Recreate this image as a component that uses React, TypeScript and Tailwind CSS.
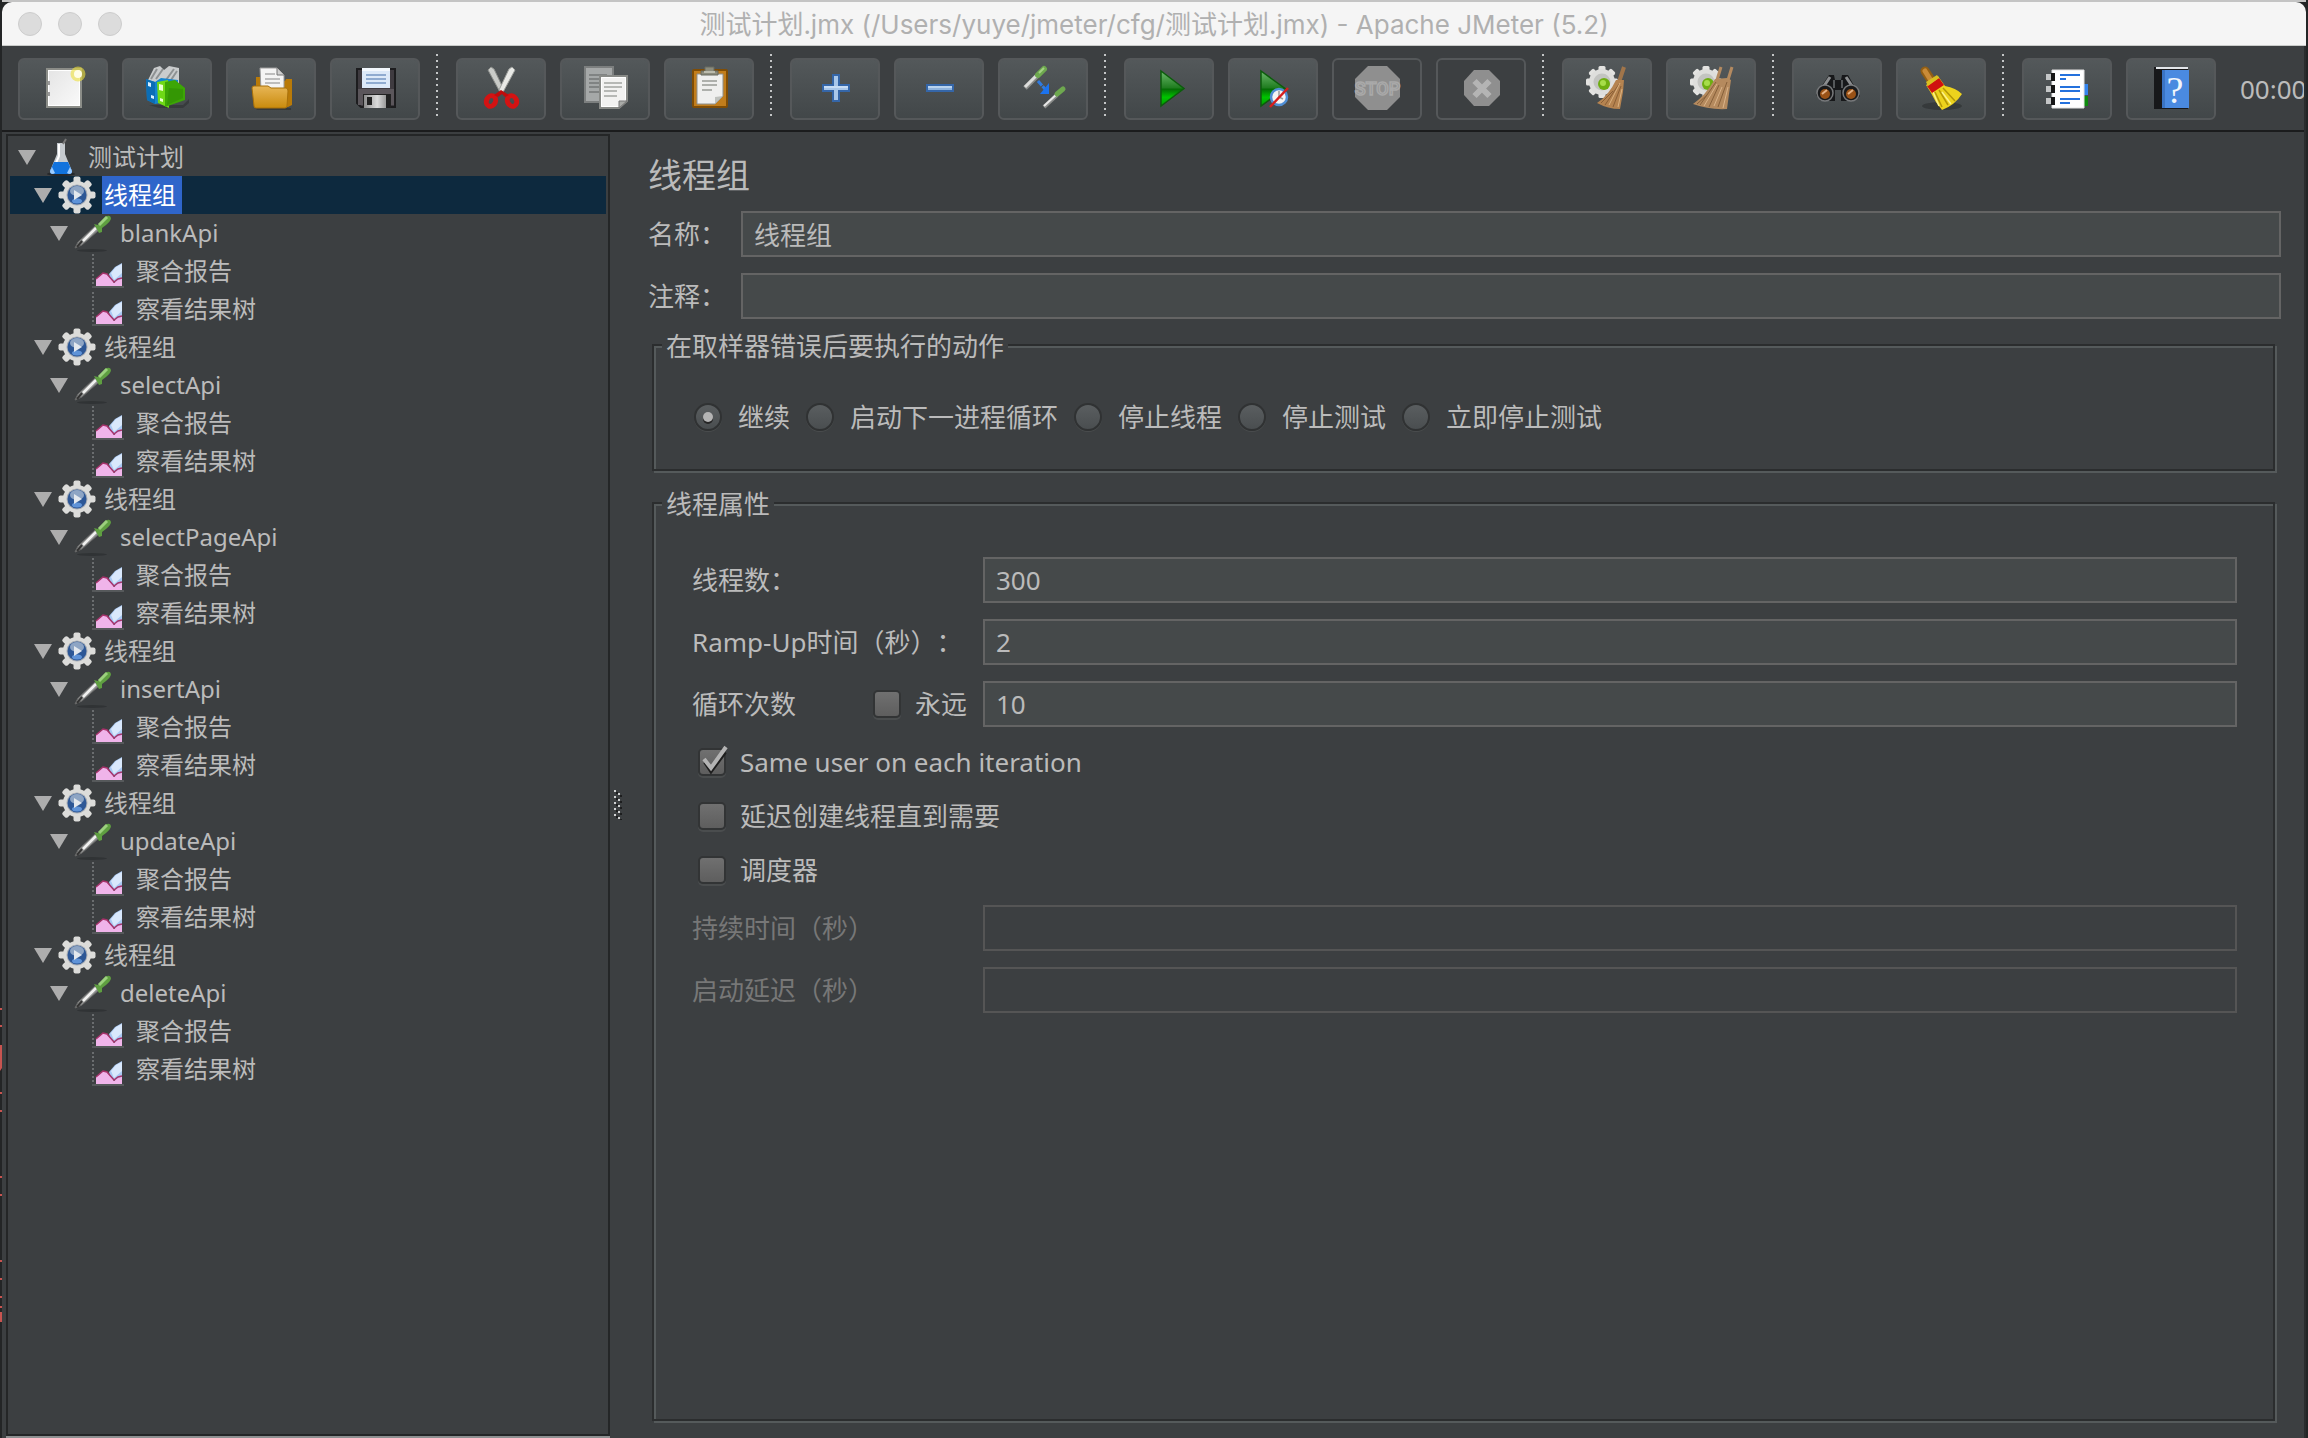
import { useState, type ReactNode } from "react";
import clsx from "clsx";

interface IconProps {
  children: ReactNode;
}

// 工具栏图标统一画布
function ToolIcon({ children }: IconProps) {
  return (
    <svg viewBox="0 0 44 44" className="size-11 overflow-visible" aria-hidden="true">
      {children}
    </svg>
  );
}

const GEAR_TEETH = [0, 45, 90, 135, 180, 225, 270, 315];

function NewIcon() {
  return (
    <ToolIcon>
      <defs>
        <linearGradient id="page" x1="0" y1="0" x2="1" y2="1">
          <stop offset="0" stopColor="#e4e4e4" />
          <stop offset="1" stopColor="#fafafa" />
        </linearGradient>
      </defs>
      <rect x="6" y="2" width="34" height="38" fill="url(#page)" stroke="#8b8d88" strokeWidth="2" />
      <rect x="7.500" y="3.500" width="31" height="35" fill="none" stroke="#fff" />
      <path d="M8 14v4M8 25v4" stroke="#999" strokeWidth="2" />
      <circle cx="37" cy="7" r="7.500" fill="#efe13c" opacity=".6" />
      <circle cx="37" cy="7" r="4" fill="#fffde6" />
    </ToolIcon>
  );
}

function TemplatesIcon() {
  return (
    <ToolIcon>
      <path d="M4 38h34l6-6v4l-6 5H14z" fill="#2d3132" opacity=".6" />
      <path d="M3 13L9 1l6-2 4 4 5-4 10 2v18H4z" fill="#c9cccd" />
      <path d="M6 12L12 2M11 12L18 2M21 13L29 2M26 13l6-9" stroke="#8e9293" strokeWidth="2" />
      <path d="M1 12l9 3 6-4 17 2v8L16 36l-6 1-8-4z" fill="#1485cf" />
      <path d="M1 12l9 3v22l-8-4z" fill="#0b6db5" />
      <path d="M3 15l3 1v4l-3-1zM6 28l3 1v3l-3-1z" fill="#d5efff" />
      <path d="M12 15l11-2 1 28-11-5z" fill="#6fd916" />
      <path d="M20 15l10-2 10 8v12L20 40z" fill="#3da606" />
      <path d="M24 21l14 1v9L22 38z" fill="#2f8e04" opacity=".6" />
      <path d="M14 17l4 1v6l-4-1zM15 31l3 1v3l-3-1z" fill="#e8ffd2" />
    </ToolIcon>
  );
}

function OpenIcon() {
  return (
    <ToolIcon>
      <defs>
        <linearGradient id="folder" x1="0" y1="0" x2="0" y2="1">
          <stop offset="0" stopColor="#e8b656" />
          <stop offset="1" stopColor="#c98b0d" />
        </linearGradient>
      </defs>
      <path d="M6 41h36v2H8z" fill="#2b2e2f" opacity=".6" />
      <path d="M7 10h6v4h23l1-2h6v26l-4 2H7z" fill="#b97a08" />
      <path d="M11 1h17l7 7v16H12z" fill="#f4f4f4" stroke="#9b9b9b" />
      <path d="M28 1v7h7" fill="#cfcfcf" stroke="#777" />
      <path d="M16 7h10M16 12h15M16 16h15" stroke="#bdbdbd" strokeWidth="2" />
      <path d="M3 21q0-2 2-2h14l3 2h15q2 0 2 3l-1 15q0 2-2 2H7q-2 0-2-2z" fill="url(#folder)" stroke="#a8700a" />
    </ToolIcon>
  );
}

function SaveIcon() {
  return (
    <ToolIcon>
      <defs>
        <linearGradient id="metal" x1="0" y1="0" x2="1" y2="0">
          <stop offset="0" stopColor="#8c8c8c" />
          <stop offset=".6" stopColor="#dcdcdc" />
          <stop offset="1" stopColor="#9a9a9a" />
        </linearGradient>
      </defs>
      <path d="M4 2h38v38H8l-4-4z" fill="#3f3b40" stroke="#1d1d1f" strokeWidth="2" />
      <path d="M5 22h36v16H5z" fill="#5b565b" />
      <rect x="9" y="1" width="28" height="20" fill="#dce9f8" />
      <rect x="9" y="1" width="28" height="3" fill="#f3f8fd" />
      <path d="M13 8h20M13 12h20M13 16h20" stroke="#8fabd0" strokeWidth="2" />
      <rect x="10" y="27" width="28" height="14" fill="#222" />
      <rect x="11" y="28" width="22" height="13" fill="url(#metal)" />
      <rect x="14" y="30" width="5" height="8" fill="#222" />
    </ToolIcon>
  );
}

function CutIcon() {
  return (
    <ToolIcon>
      <path d="M9 3l3-3 3 2 10 21-3 4z" fill="#c9cbc8" stroke="#8d8f8c" />
      <path d="M36 3l-3-3-3 2-10 21 3 4z" fill="#e8e9e6" stroke="#9d9f9c" />
      <g fill="none" stroke="#d31313" strokeWidth="5">
        <ellipse cx="12" cy="34" rx="4.500" ry="5.500" transform="rotate(25 12 34)" />
        <ellipse cx="33" cy="34" rx="4.500" ry="5.500" transform="rotate(-25 33 34)" />
      </g>
      <path d="M15 28l7-5 8 5-4 2-3-3-4 3z" fill="#c00b0b" />
    </ToolIcon>
  );
}

function CopyIcon() {
  return (
    <ToolIcon>
      <path d="M2 0h28v35H2z" fill="#a5a8a8" stroke="#7c7f7f" strokeWidth="2" />
      <path d="M6 8h18M6 12h18M6 16h10M6 20h10M6 25h10" stroke="#808383" strokeWidth="2" />
      <path d="M17 9h27v25l-8 7H17z" fill="#f2f2f1" stroke="#888a87" strokeWidth="2" />
      <path d="M18.500 10.500h24v22l-7 7h-17z" fill="none" stroke="#fff" />
      <path d="M36 41v-7h8z" fill="#a9aba8" stroke="#777" />
      <path d="M21 16h18M21 20h18M21 24h13M21 29h13" stroke="#b6b8b5" strokeWidth="2" />
    </ToolIcon>
  );
}

function PasteIcon() {
  return (
    <ToolIcon>
      <rect x="6" y="3" width="34" height="37" rx="1" fill="#c17d1c" stroke="#804d05" strokeWidth="2" />
      <path d="M10 7h26v22l-8 8H10z" fill="#efefee" stroke="#8d8f8b" />
      <path d="M36 29l-8 8v-7z" fill="#bfc1bd" />
      <path d="M15 14h15M15 18h15M15 23h10" stroke="#aeb0ac" strokeWidth="2" />
      <path d="M14 8V4h4V0h9v4h4v4z" fill="#8c8c7d" stroke="#696a60" />
      <path d="M17 5h11" stroke="#bcbcae" strokeWidth="2" />
    </ToolIcon>
  );
}

function PlusIcon() {
  return (
    <ToolIcon>
      <path d="M20 8h6v10h10v6H26v10h-6V24H10v-6h10z" fill="#a9c7ea" stroke="#3566a8" strokeWidth="2" />
      <path d="M11 20h24" stroke="#c7dcf4" strokeWidth="2" />
    </ToolIcon>
  );
}

function MinusIcon() {
  return (
    <ToolIcon>
      <rect x="10" y="18" width="26" height="6" fill="#8fb4df" stroke="#3566a8" strokeWidth="2" />
      <path d="M11 20h24" stroke="#b9d3ef" strokeWidth="2" />
    </ToolIcon>
  );
}

function ToggleIcon() {
  return (
    <ToolIcon>
      <path d="M4 21L17 8" stroke="#8a8c8a" strokeWidth="5" />
      <path d="M4 20L17 7" stroke="#dcdddc" strokeWidth="3" />
      <path d="M17 8L23 2" stroke="#6ea84f" strokeWidth="6" strokeLinecap="round" />
      <path d="M18 6l5-5" stroke="#a3d284" strokeWidth="2" />
      <path d="M23 40L36 28" stroke="#8a8c8a" strokeWidth="4" />
      <path d="M23 39L36 27" stroke="#e8e8e8" strokeWidth="2" />
      <path d="M36 27l6-5" stroke="#6ea84f" strokeWidth="5" strokeLinecap="round" />
      <path d="M17 14l7 8" stroke="#2f7be0" strokeWidth="3" strokeDasharray="6 1" />
      <path d="M28 16v11H19z" fill="#1c73ee" />
    </ToolIcon>
  );
}

function PlayGradient() {
  return (
    <defs>
      <linearGradient id="play" x1="0" y1="0" x2="0" y2="1">
        <stop offset="0" stopColor="#6db86d" />
        <stop offset=".48" stopColor="#1f7d1f" />
        <stop offset=".52" stopColor="#056b05" />
        <stop offset=".75" stopColor="#00c400" />
        <stop offset="1" stopColor="#009b00" />
      </linearGradient>
    </defs>
  );
}

function StartIcon() {
  return (
    <ToolIcon>
      <PlayGradient />
      <path d="M14 4l23 17.500L14 39z" fill="url(#play)" stroke="#0c5c0c" strokeWidth="1.500" />
    </ToolIcon>
  );
}

function StartNoTimersIcon() {
  return (
    <ToolIcon>
      <PlayGradient />
      <path d="M10 4l24 17.500L10 39z" fill="url(#play)" stroke="#0c5c0c" strokeWidth="1.500" />
      <circle cx="28" cy="30" r="8" fill="#f4f4f4" stroke="#4f8ed4" strokeWidth="2.500" />
      <path d="M28 24v6l4 2" stroke="#9c9c9c" fill="none" strokeWidth="1.500" />
      <path d="M19 40L37 21" stroke="#d61f1f" strokeWidth="2.500" />
    </ToolIcon>
  );
}

function StopIcon() {
  return (
    <ToolIcon>
      <path d="M13-1h19l13 13v18L32 43H13L0 30V12z" fill="#8f8f8f" />
      <text
        x="22.500"
        y="28"
        textAnchor="middle"
        fontSize="18"
        fill="#8f8f8f"
        stroke="#a9a9a9"
        strokeWidth="1.500"
        className="font-['Roboto',sans-serif] font-medium"
      >
        STOP
      </text>
    </ToolIcon>
  );
}

function ShutdownIcon() {
  return (
    <ToolIcon>
      <path d="M15 3h15l11 11v14L30 39H15L5 28V14z" fill="#8f8f8f" />
      <path d="M15.500 14l15 15M30.500 14l-15 15" stroke="#b4b4b4" strokeWidth="6" />
    </ToolIcon>
  );
}

function GearBase() {
  return (
    <g transform="translate(17 15)">
      {GEAR_TEETH.map((deg) => (
        <rect key={deg} x="-3.500" y="-16" width="7" height="10" rx="1.500" fill="#e3e3e1" transform={`rotate(${deg})`} />
      ))}
      <circle r="13" fill="#dededc" />
      <circle r="8.500" fill="#c3c4c1" />
      <circle cx="2" cy="2" r="6" fill="#6fae12" />
      <circle cx="1" cy="1" r="3" fill="#a7dd4a" />
    </g>
  );
}

function ClearIcon() {
  return (
    <ToolIcon>
      <GearBase />
      <path d="M39 0L34 15" stroke="#a1754a" strokeWidth="4" />
      <path d="M31 13h8l-1 12-3 17q-12 0-23-6 12-8 19-23z" fill="#b58350" />
      <path d="M34 17L20 38M36 19l-8 21M28 24l-12 12" stroke="#8a5f36" />
      <path d="M35 16l-11 22M37 22l-4 18" stroke="#dcb382" />
    </ToolIcon>
  );
}

function ClearAllIcon() {
  return (
    <ToolIcon>
      <GearBase />
      <path d="M32 0l-4 13M43 0l-4 13" stroke="#b48a60" strokeWidth="3" />
      <path d="M26 12l12-1 4 2-2 14-2 15q-18 1-34-5 12-8 22-25z" fill="#b58a5e" />
      <path d="M27 15L11 38M30 18L20 40M38 15l-9 25M18 28L8 37" stroke="#86603a" />
      <path d="M28 17L15 39M39 20l-5 21M33 20l-8 19" stroke="#dcb58a" />
    </ToolIcon>
  );
}

function SearchIcon() {
  return (
    <ToolIcon>
      <path d="M14 8h5l1 5h6l1-5h6l8 14 4 7-6 5H26V23h-6v11H6l-5-6 5-8z" fill="#17181a" />
      <path d="M15 10l-8 12M31 10l8 12" stroke="#8b8d8f" strokeWidth="3" />
      <path d="M19 13v8M27 13v8" stroke="#55585a" strokeWidth="2" />
      <circle cx="10" cy="26" r="8" fill="#1a1a1b" stroke="#77797b" strokeWidth="1.500" />
      <circle cx="36" cy="26" r="8" fill="#1a1a1b" stroke="#77797b" strokeWidth="1.500" />
      <circle cx="10" cy="27" r="5" fill="#9a5216" />
      <circle cx="36" cy="27" r="5" fill="#9a5216" />
      <path d="M7 27l5-4M33 27l5-4" stroke="#e5b183" strokeWidth="2" />
    </ToolIcon>
  );
}

function ResetSearchIcon() {
  return (
    <ToolIcon>
      <ellipse cx="23" cy="39" rx="20" ry="4" fill="#2c2f30" opacity=".6" />
      <path d="M6 4l6 9" stroke="#935f14" strokeWidth="9" strokeLinecap="round" />
      <path d="M6 4l5 8" stroke="#c98b38" strokeWidth="5" strokeLinecap="round" />
      <path d="M7 18l12-9 7 10q11 2 17 8-7 11-20 16-7-8-11-17z" fill="#ecd21d" />
      <path d="M16 25l7 15M20 23l9 15M24 21l12 13" stroke="#b39607" strokeWidth="1.500" />
      <path d="M14 25l6 14M23 25l9 12" stroke="#fbf18a" strokeWidth="1.500" />
      <path d="M8 19l12-8 5 7-12 8z" fill="#cf1010" />
      <path d="M7 15l11-7 2 3-11 8z" fill="#d9bf20" />
    </ToolIcon>
  );
}

function FunctionHelperIcon() {
  return (
    <ToolIcon>
      <path d="M37 17h6v11h-6z" fill="#3584ec" />
      <path d="M37 29h6v10h-6z" fill="#0d8a0d" />
      <path d="M7 3h32v38H7z" fill="#fff" stroke="#e3e3e3" />
      <path d="M6 6h4v8H6zM6 18h4v8H6zM6 30h4v8H6z" fill="#161616" />
      <path d="M1 7h5v6H1zM1 19h5v6H1zM1 31h5v6H1z" fill="#c4c6c7" />
      <path d="M15 8h20M15 12h6M15 20h20M15 24h20M15 32h20M15 36h10" stroke="#2471dd" strokeWidth="2" />
    </ToolIcon>
  );
}

function HelpIcon() {
  return (
    <ToolIcon>
      <path d="M5 0h34v42H5z" fill="#17181a" />
      <path d="M7 1h32" stroke="#e2e6ea" strokeWidth="2" />
      <path d="M13 3h27v38H13z" fill="#4a8ae0" />
      <path d="M13 3h3v38h-3z" fill="#3a74c4" />
      <text x="26" y="36" textAnchor="middle" fontSize="38" fill="#f2f6fb" className="font-['Liberation_Serif',serif]">
        ?
      </text>
    </ToolIcon>
  );
}

interface Tool {
  name: string;
  icon: ReactNode;
  disabled?: boolean;
}

const TOOL_GROUPS: Tool[][] = [
  [
    { name: "新建", icon: <NewIcon /> },
    { name: "模板", icon: <TemplatesIcon /> },
    { name: "打开", icon: <OpenIcon /> },
    { name: "保存", icon: <SaveIcon /> },
  ],
  [
    { name: "剪切", icon: <CutIcon /> },
    { name: "复制", icon: <CopyIcon /> },
    { name: "粘贴", icon: <PasteIcon /> },
  ],
  [
    { name: "展开全部", icon: <PlusIcon /> },
    { name: "折叠全部", icon: <MinusIcon /> },
    { name: "切换", icon: <ToggleIcon /> },
  ],
  [
    { name: "启动", icon: <StartIcon /> },
    { name: "无停顿启动", icon: <StartNoTimersIcon /> },
    { name: "停止", icon: <StopIcon />, disabled: true },
    { name: "关闭", icon: <ShutdownIcon />, disabled: true },
  ],
  [
    { name: "清除", icon: <ClearIcon /> },
    { name: "清除全部", icon: <ClearAllIcon /> },
  ],
  [
    { name: "查找", icon: <SearchIcon /> },
    { name: "重置搜索", icon: <ResetSearchIcon /> },
  ],
  [
    { name: "函数助手", icon: <FunctionHelperIcon /> },
    { name: "帮助", icon: <HelpIcon /> },
  ],
];

function Toolbar() {
  return (
    <div className="flex items-center overflow-hidden border-b-2 border-[#1b1c1d] pt-3 pb-2.5 pl-4" role="toolbar">
      {TOOL_GROUPS.map((group, idx) => (
        <div key={idx} className="flex shrink-0 items-center">
          {idx > 0 && (
            <div className="-my-1 mr-[18px] ml-4 h-[62px] w-0.5 self-start bg-[repeating-linear-gradient(to_bottom,#c4c6c7_0_2px,transparent_2px_6px)]" />
          )}
          <div className="flex gap-3.5">
            {group.map((tool) => (
              <button
                key={tool.name}
                type="button"
                aria-label={tool.name}
                disabled={tool.disabled}
                className={clsx(
                  "flex h-[62px] w-[90px] items-center justify-center rounded-md border-2 border-[#55585a]",
                  !tool.disabled && "bg-linear-to-b from-[#53585a] to-[#424749]"
                )}
              >
                {tool.icon}
              </button>
            ))}
          </div>
        </div>
      ))}
      <span className="ml-6 shrink-0 text-[26px] leading-9">00:00:00</span>
    </div>
  );
}

/* ---------- 左侧树 ---------- */

function FlaskIcon() {
  return (
    <svg viewBox="0 0 40 38" className="h-[38px] w-10" aria-hidden="true">
      <ellipse cx="20" cy="36" rx="14" ry="2" fill="#26282a" />
      <path d="M16 5h8v11l7 17q0 3-3 3H12q-3 0-3-3l7-17z" fill="#c5cacf" />
      <path d="M18 6v12l-6 14" stroke="#fff" strokeWidth="2" fill="none" />
      <path d="M13 24h14l4 9q0 3-3 3H12q-3 0-3-3z" fill="#1273dd" />
      <path d="M11 29l-2 4q0 3 3 3l2-1z" fill="#9cccff" />
      <path d="M29 29l2 4q0 3-3 3l-2-1z" fill="#9cccff" />
      <path d="M22 6l3-5" stroke="#777" strokeWidth="2" />
    </svg>
  );
}

function ThreadGroupIcon() {
  return (
    <svg viewBox="-20 -19 40 38" className="h-[38px] w-10" aria-hidden="true">
      {GEAR_TEETH.map((deg) => (
        <rect key={deg} x="-3.500" y="-18.500" width="7" height="10" rx="2" fill="#dcdcda" transform={`rotate(${deg})`} />
      ))}
      <circle r="14" fill="#dcdcda" />
      <circle r="10.500" fill="#a9aeb6" />
      <circle r="9.500" fill="#2d5796" />
      <ellipse cy="-4" rx="7" ry="5" fill="#8ea5c4" />
      <ellipse cy="6" rx="5" ry="2.500" fill="#5f93d8" />
      <path d="M-3-5l8 5-8 5z" fill="#e3e8ee" />
    </svg>
  );
}

function SamplerIcon() {
  return (
    <svg viewBox="0 0 40 38" className="h-[38px] w-10" aria-hidden="true">
      <ellipse cx="19" cy="36.500" rx="15" ry="1.500" fill="#303335" />
      <path d="M2 34l3-6L22 12l4 4L9 31z" fill="#8f9190" stroke="#666" />
      <path d="M10 27l13-13" stroke="#f0f0ef" strokeWidth="2.500" />
      <path d="M4 33l5-6" stroke="#333" strokeWidth="2" />
      <path d="M21 10l4 1 7-8q5-3 6 1 0 3-5 7l-4 3v4l-3 1z" fill="#5f9f41" />
      <path d="M26 11l8-8" stroke="#9cd07e" strokeWidth="3" />
    </svg>
  );
}

function ReportIcon() {
  return (
    <svg viewBox="0 0 40 38" className="h-[38px] w-10" aria-hidden="true">
      <path d="M4 2v34" stroke="#6a6d6f" strokeWidth="2" strokeDasharray="2 2" />
      <path d="M3 35h32" stroke="#56595b" strokeWidth="2" />
      <path d="M20 22l6-7 7-4v19H22z" fill="#a9c9f3" />
      <path d="M22 21l5-6 6-3v9l-8 7z" fill="#d9e8fc" />
      <path d="M7 34v-7l7-6 4 1 7 9 4-3 4-1v7z" fill="#f0b4ea" />
      <path d="M7 27l7-6 4 1 7 8 4-3 4-1" fill="none" stroke="#a6336b" strokeWidth="1.500" />
    </svg>
  );
}

interface TreeNode {
  label: string;
  level: number;
  kind: "plan" | "group" | "sampler" | "report";
  selected?: boolean;
}

const API_NAMES = ["blankApi", "selectApi", "selectPageApi", "insertApi", "updateApi", "deleteApi"];

const TREE: TreeNode[] = [
  { label: "测试计划", level: 0, kind: "plan" },
  ...API_NAMES.flatMap((name, idx): TreeNode[] => [
    { label: "线程组", level: 1, kind: "group", selected: idx === 0 },
    { label: name, level: 2, kind: "sampler" },
    { label: "聚合报告", level: 3, kind: "report" },
    { label: "察看结果树", level: 3, kind: "report" },
  ]),
];

const NODE_ICONS = {
  plan: <FlaskIcon />,
  group: <ThreadGroupIcon />,
  sampler: <SamplerIcon />,
  report: <ReportIcon />,
};

const INDENTS = ["pl-2", "pl-6", "pl-10", "pl-14"];

function TreeRow({ node }: { node: TreeNode }) {
  return (
    <li
      role="treeitem"
      aria-level={node.level + 1}
      aria-selected={!!node.selected}
      className={clsx("flex h-[38px] items-center", INDENTS[node.level], node.selected && "bg-[#0d293e]")}
    >
      <svg viewBox="0 0 18 15" className="mr-[5px] w-[18px] shrink-0" aria-hidden="true">
        {node.kind !== "report" && <path d="M0 0h18L9 15z" fill="#adadad" />}
      </svg>
      {NODE_ICONS[node.kind]}
      <span
        className={clsx(
          "ml-[5px] flex h-[38px] items-center pr-1.5 pl-0.5 text-[24px] leading-9 whitespace-nowrap",
          node.selected && "bg-[#2f65ca] text-white"
        )}
      >
        {node.label}
      </span>
    </li>
  );
}

/* ---------- 表单控件 ---------- */

interface FieldProps {
  id: string;
  label: string;
  value?: string;
  disabled?: boolean;
  children?: ReactNode;
}

function Field({ id, label, value = "", disabled, children }: FieldProps) {
  const [text, setText] = useState(value);
  return (
    <>
      <div className={clsx("flex items-center justify-between whitespace-nowrap", disabled && "text-[#777777]")}>
        <label htmlFor={id}>{label}</label>
        {children}
      </div>
      <input
        id={id}
        type="text"
        value={text}
        disabled={disabled}
        onChange={(e) => setText(e.target.value)}
        className={clsx(
          "h-[46px] w-full min-w-0 border-2 px-[11px] outline-none",
          disabled ? "border-[#555555]" : "border-[#646464] bg-[#45494a]"
        )}
      />
    </>
  );
}

interface CheckProps {
  label: string;
  defaultChecked?: boolean;
}

function Check({ label, defaultChecked }: CheckProps) {
  return (
    <label className="flex items-center gap-3.5">
      <span className="relative flex">
        <input
          type="checkbox"
          defaultChecked={defaultChecked}
          className="peer size-7 appearance-none rounded-[5px] border-2 border-[#323435] bg-linear-to-b from-[#707070] to-[#5e5e5e] shadow-[0_2px_0_#4a4d4e]"
        />
        <svg viewBox="0 0 28 28" className="pointer-events-none absolute inset-0 hidden overflow-visible peer-checked:block" aria-hidden="true">
          <path d="M7 14l6 9L27 4" fill="none" stroke="#1e1e1e" strokeWidth="4" />
          <path d="M6 11l7 9L28-1" fill="none" stroke="#b4b4b4" strokeWidth="4" />
        </svg>
      </span>
      {label}
    </label>
  );
}

// 蚀刻边框：深色线 + 右下偏移的浅色线，标题底色盖住上边线
function Group({ title, className, children }: { title: string; className: string; children: ReactNode }) {
  return (
    <fieldset
      className={clsx(
        "mr-1.5 ml-1 min-w-0 border-2 border-[#2b2d2e] shadow-[inset_2px_2px_0_#555a5b,2px_2px_0_#555a5b]",
        className
      )}
    >
      <legend className="relative ml-2 bg-[#3c3f41] px-1 pt-0.5 leading-9">{title}</legend>
      {children}
    </fieldset>
  );
}

const ERROR_ACTIONS = ["继续", "启动下一进程循环", "停止线程", "停止测试", "立即停止测试"];

function ThreadGroupPanel() {
  return (
    <main className="flex min-w-0 flex-1 flex-col pt-[19px] pr-[23px] pb-[17px] pl-[22px] text-[26px] leading-9 [text-spacing-trim:space-all]">
      <h1 className="text-[34px] leading-12">线程组</h1>
      <div className="mt-3 grid grid-cols-[77px_1fr] gap-4">
        <Field id="name" label="名称：" value="线程组" />
        <Field id="comments" label="注释：" />
      </div>

      <Group title="在取样器错误后要执行的动作" className="mt-[7px]">
        <div className="flex h-[105px] items-center gap-4 pr-9 pl-10">
          {ERROR_ACTIONS.map((action) => (
            <label key={action} className="flex items-center gap-4">
              <input
                type="radio"
                name="on-error"
                defaultChecked={action === "继续"}
                className="flex size-7 appearance-none items-center justify-center rounded-full border-2 border-[#303233] bg-linear-to-b from-[#5a5e60] to-[#4a4e50] shadow-[0_1px_0_#4a4d4e] checked:before:size-2.5 checked:before:rounded-full checked:before:bg-[#b4b4b4] checked:before:shadow-[0_2px_0_#252525]"
              />
              {action}
            </label>
          ))}
        </div>
      </Group>

      <Group title="线程属性" className="mt-[13px] flex-1">
        <div className="pt-[35px] pr-9 pb-9 pl-[38px]">
          <div className="grid grid-cols-[275px_1fr] gap-4">
            <Field id="threads" label="线程数：" value="300" />
            <Field id="ramp-up" label="Ramp-Up时间（秒）：" value="2" />
            <Field id="loops" label="循环次数" value="10">
              <Check label="永远" />
            </Field>
          </div>
          <div className="flex flex-col gap-[18px] py-[17px] pl-1.5">
            <Check label="Same user on each iteration" defaultChecked />
            <Check label="延迟创建线程直到需要" />
            <Check label="调度器" />
          </div>
          <div className="grid grid-cols-[275px_1fr] gap-4">
            <Field id="duration" label="持续时间（秒）" disabled />
            <Field id="delay" label="启动延迟（秒）" disabled />
          </div>
        </div>
      </Group>
    </main>
  );
}

export default function App() {
  return (
    <div className="flex min-h-screen bg-[#232526] pr-0.5 font-['Noto_Sans','Noto_Sans_CJK_SC',sans-serif] text-[#bbbbbb]">
      {/* 后面窗口露出的边缘 */}
      <svg className="w-0.5 shrink-0" viewBox="0 0 2 1438" preserveAspectRatio="xMidYMin slice" aria-hidden="true">
        <path
          d="M0 1009h2M0 1026h2M0 1093h2M0 1111h2M0 1177h2M0 1195h2M0 1261h2M0 1279h2M0 1297h2M0 1307h2"
          stroke="#c75450"
          strokeWidth="2"
        />
        <path d="M0 1045h2v23l-2 3zM0 1312h2v10H0z" fill="#c75450" />
      </svg>
      <div className="flex min-w-0 flex-1 flex-col border-t-2 border-[#c4c4c4]">
        <header className="flex h-11 items-center rounded-t-[10px] border-b border-[#c9cbc9] bg-[#f5f5f5] px-4">
          <div className="flex flex-1 gap-4">
            <button type="button" aria-label="关闭窗口" className="size-6 rounded-full border border-[#cdcdcd] bg-[#dcdcdc]" />
            <button type="button" aria-label="最小化" className="size-6 rounded-full border border-[#cdcdcd] bg-[#dcdcdc]" />
            <button type="button" aria-label="缩放" className="size-6 rounded-full border border-[#cdcdcd] bg-[#dcdcdc]" />
          </div>
          <div className="pt-0.5 font-['Inter','Noto_Sans_CJK_SC',sans-serif] text-[26px] leading-9 whitespace-nowrap text-[#b0b0b0]">
            测试计划.jmx (/Users/yuye/jmeter/cfg/测试计划.jmx) - Apache JMeter (5.2)
          </div>
          <div className="flex-1" />
        </header>

        <div className="flex flex-1 flex-col border-r-2 border-[#2a2c2d] bg-[#3c3f41]">
          <Toolbar />
          <div className="flex flex-1">
            <nav className="mt-0.5 ml-1 flex w-[604px] shrink-0 flex-col border-b-2 border-[#8e9192]">
              <ul role="tree" className="flex-1 border-2 border-[#242627] px-0.5 pt-0.5">
                {TREE.map((node, idx) => (
                  <TreeRow key={idx} node={node} />
                ))}
              </ul>
            </nav>
            {/* 分隔条 */}
            <div className="flex w-4 shrink-0 items-center justify-center pt-10" role="separator" aria-orientation="vertical">
              <svg viewBox="0 0 10 30" className="h-[30px] w-2.5" aria-hidden="true">
                {[0, 6, 12, 18, 24].map((y) => (
                  <g key={y}>
                    <path d={`M1 ${y + 1}h2M5 ${y + 4}h2`} stroke="#d0d2d3" strokeWidth="2" />
                    <path d={`M3 ${y + 3}h2M7 ${y + 6}h2`} stroke="#1c1d1e" strokeWidth="2" />
                  </g>
                ))}
              </svg>
            </div>
            <ThreadGroupPanel />
          </div>
        </div>
      </div>
    </div>
  );
}
